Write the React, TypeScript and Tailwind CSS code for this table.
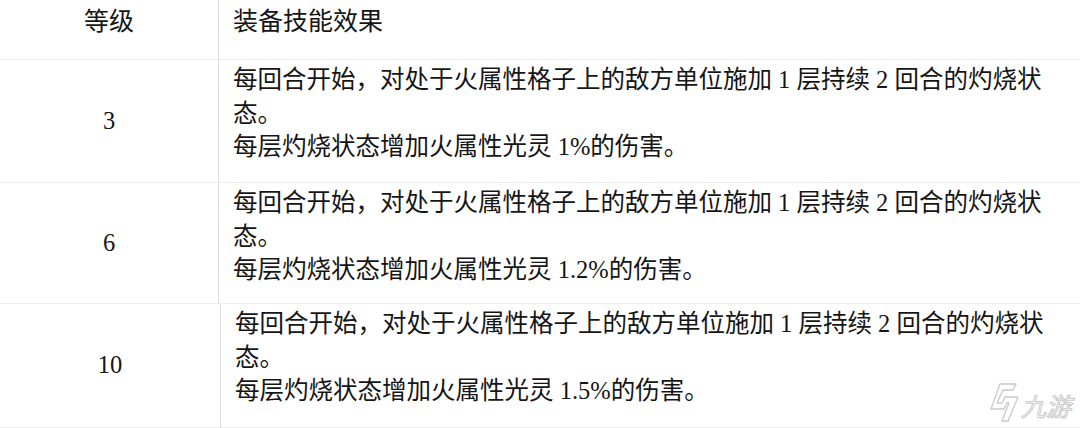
const rows = [
  { level: "3", pct: "1%", h: "h-[123px]", w: "w-[219px]" },
  { level: "6", pct: "1.2%", h: "h-[121px]", w: "w-[219px]" },
  { level: "10", pct: "1.5%", h: "h-[124px]", w: "w-[221px]" },
];

function Watermark() {
  return (
    <svg
      className="absolute right-0 bottom-[3px]"
      width="92"
      height="44"
      viewBox="0 0 92 44"
      fill="none"
    >
      <path
        d="M12 3 L28 3 L25 9 L15 9 L9 22 L14 22 L17 16 L30 16 L20 40 L14 40 L21 22 L19 22 L16 28 L3 28 Z"
        stroke="#c9c9c9"
        strokeWidth="1.3"
        strokeLinejoin="round"
        fill="#ffffff"
      />
      <text
        x="33"
        y="35"
        fontSize="25"
        fontStyle="italic"
        fontFamily="'Noto Sans CJK SC', sans-serif"
        fill="#ffffff"
        stroke="#c9c9c9"
        strokeWidth="1"
      >
        九游
      </text>
    </svg>
  );
}

export default function App() {
  return (
    <div
      className="relative w-[1080px] h-[428px] overflow-hidden bg-white text-[#151515]"
      style={{ fontFamily: '"Liberation Serif", "Noto Sans CJK SC", serif' }}
    >
      <div className="flex h-[60px] border-b border-[#ececec]">
        <div className="w-[219px] border-r border-[#dcdcdc] pt-[6px] text-center text-[25px] leading-[32px]">
          等级
        </div>
        <div className="flex-1 pl-[14px] pt-[6px] text-[25px] leading-[32px]">
          装备技能效果
        </div>
      </div>
      {rows.map((r) => (
        <div key={r.level} className={`flex ${r.h} border-b border-[#ececec]`}>
          <div
            className={`${r.w} flex items-center justify-center border-r border-[#dcdcdc] text-[24.5px]`}
          >
            {r.level}
          </div>
          <div className="flex-1 pl-[14px] pt-[3px] text-[24.5px] leading-[33.5px]">
            <div>每回合开始，对处于火属性格子上的敌方单位施加 1 层持续 2 回合的灼烧状</div>
            <div>态。</div>
            <div>每层灼烧状态增加火属性光灵 {r.pct}的伤害。</div>
          </div>
        </div>
      ))}
      <Watermark />
    </div>
  );
}
